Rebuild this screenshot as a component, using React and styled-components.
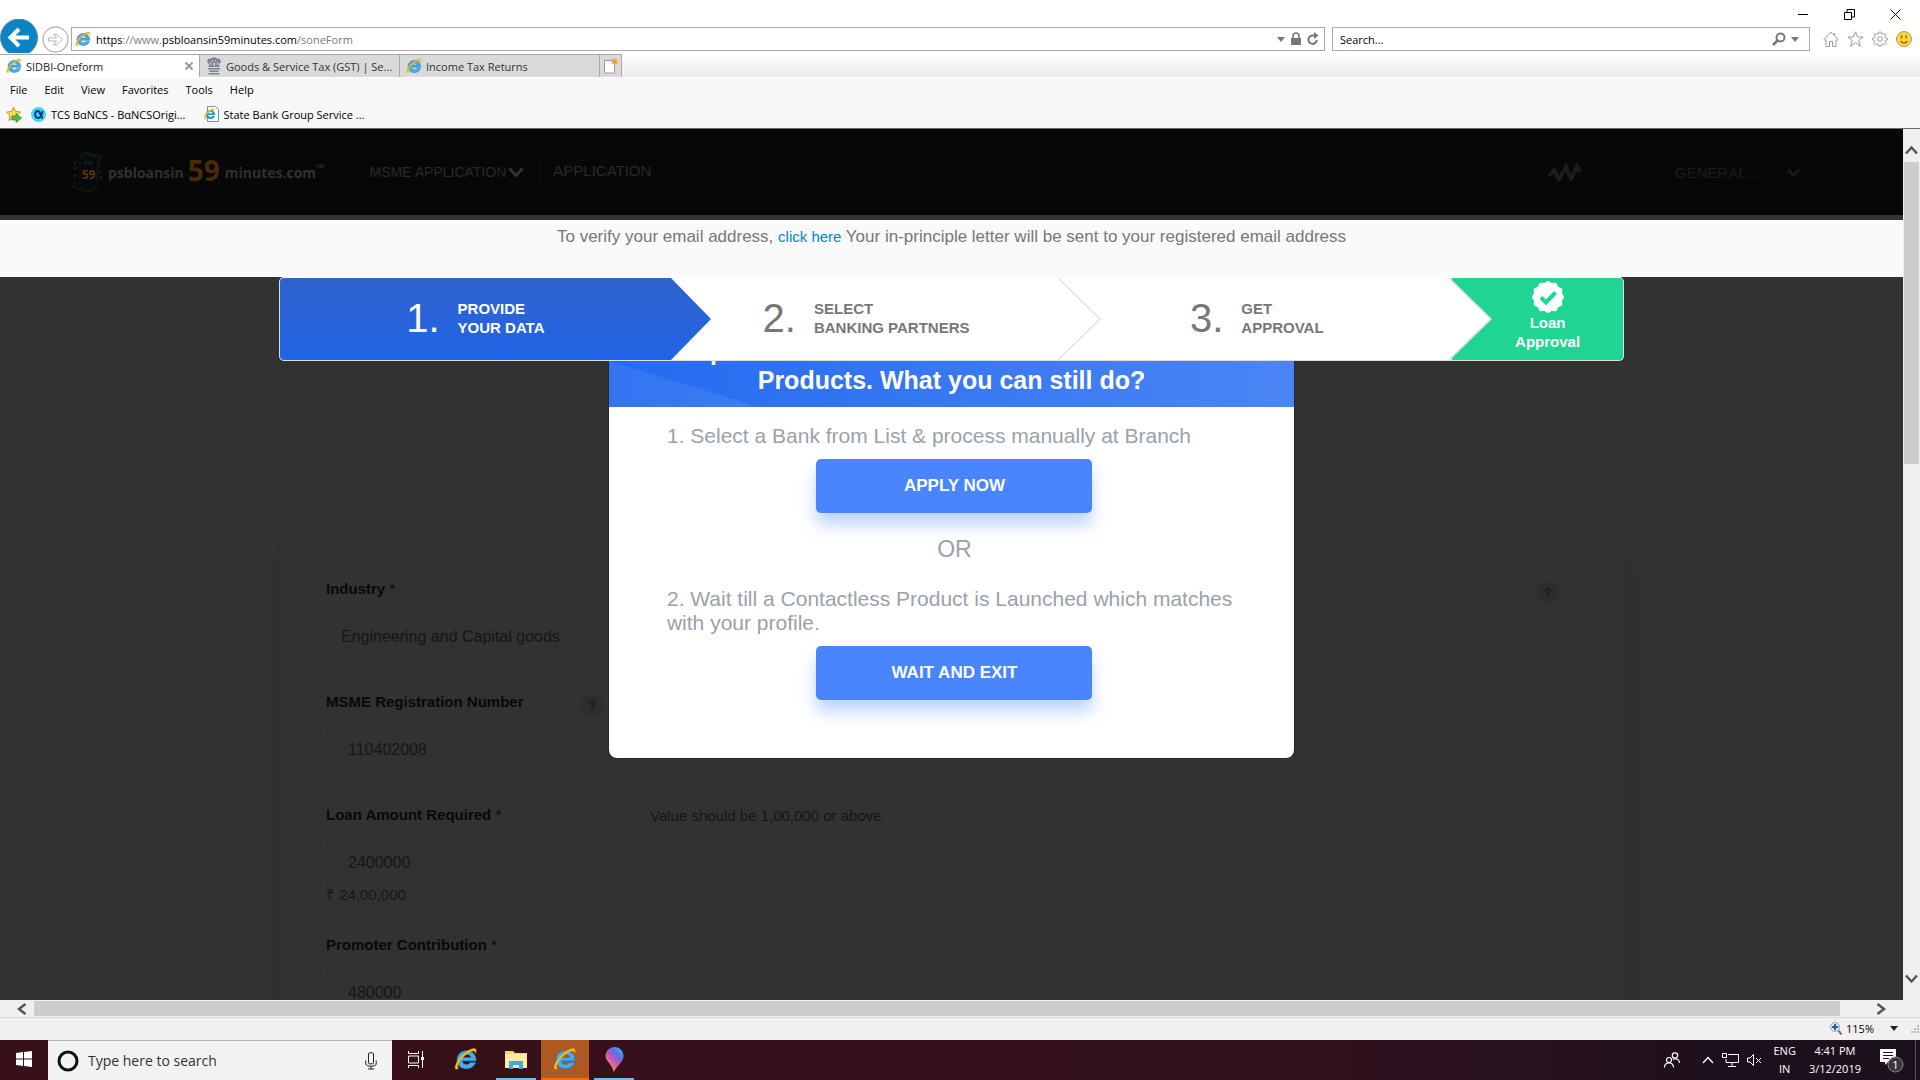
import React from "react";
import styled, { createGlobalStyle, css } from "styled-components";

const UI = '"Open Sans", "Noto Sans", sans-serif';
const BODY = '"Liberation Sans", Arial, sans-serif';

const GlobalStyle = createGlobalStyle`
  *, *::before, *::after { box-sizing: border-box; }
  body { margin: 0; overflow: hidden; background: #323232; }
  button, input { font: inherit; color: inherit; }
  button { border: 0; padding: 0; background: none; cursor: pointer; }
  svg { display: block; flex: none; }
  a { text-decoration: none; color: inherit; }
`;

const Desktop = styled.div`
  display: flex;
  flex-direction: column;
  height: 100vh;
  font-family: ${UI};
  font-size: 11px;
  color: #000;
`;

/* ---------- browser chrome ---------- */

const Chrome = styled.header`
  flex: none;
  background: #fff;
  border-bottom: 1px solid #6d6d6d;
`;

const TitleBar = styled.div`
  display: flex;
  justify-content: flex-end;
  height: 25px;
  padding: 2px 2px 0 0;
`;

const WindowButton = styled.button`
  display: flex;
  align-items: center;
  justify-content: center;
  width: 46px;
  height: 24px;
`;

const AddressRow = styled.div`
  display: flex;
  align-items: center;
  height: 29px;
  padding: 0 8px 1px 0;
`;

const BackButton = styled.button`
  width: 39px;
  height: 28px;
  svg { margin-top: -6px; }
`;

const ForwardButton = styled.button`
  width: 32px;
  padding-left: 3px;
`;

const Box = styled.div`
  display: flex;
  align-items: center;
  gap: 5px;
  height: 24px;
  padding: 0 5px 0 3px;
  border: 1px solid #a9a9a9;
  background: #fff;
`;

const AddressBox = styled(Box)`
  flex: 1;
  margin-right: 7px;
`;

const Address = styled.div`
  flex: 1;
  outline: 0;
  color: #7b7b7b;
  white-space: nowrap;
  b { font-weight: 400; color: #000; }
`;

const SearchBox = styled(Box)`
  width: 478px;
  padding-left: 7px;
`;

const SearchField = styled.input`
  flex: 1;
  border: 0;
  padding: 0;
  outline: 0;
  background: none;
  &::placeholder { color: #000; opacity: 1; }
`;

const ChromeIcons = styled.div`
  display: flex;
  align-items: center;
  gap: 8px;
  margin-left: 13px;
`;

const TabRow = styled.div`
  display: flex;
  height: 24px;
  background: linear-gradient(#fff, #ececec);
  border-bottom: 1px solid #fff;
`;

const Tab = styled.button`
  display: flex;
  align-items: center;
  gap: 4px;
  width: 200px;
  padding: 0 6px;
  border: solid #a9a9a9;
  border-width: 1px 1px 0 0;
  text-align: left;
  white-space: nowrap;
  color: ${(p) => (p.$active ? "#222" : "#333")};
  background: ${(p) => (p.$active ? "#fff" : "#dadada")};
  span { flex: 1; }
`;

const NewTab = styled(Tab)`
  width: 22px;
  padding: 0 4px;
`;

const MenuBar = styled.nav`
  display: flex;
  align-items: center;
  gap: 17px;
  height: 24px;
  padding: 0 0 2px 10px;
  background: #f7f7f7;
`;

const FavoritesBar = styled(MenuBar)`
  gap: 18px;
  height: 26px;
  padding-left: 6px;
`;

const Favorite = styled.a`
  display: flex;
  align-items: center;
  gap: 5px;
`;

const FavGroup = styled.div`
  display: flex;
  gap: 9px;
`;

/* ---------- viewport and scrollbars ---------- */

const Viewport = styled.div`
  display: flex;
  flex: 1;
  min-height: 0;
`;

const VScroll = styled.div`
  display: flex;
  flex-direction: column;
  align-items: center;
  justify-content: space-between;
  width: 17px;
  padding: 16px 0;
  background: #efefef;
`;

const VThumb = styled.div`
  flex: 0 0 36%;
  width: 15px;
  margin: 7px 0 auto;
  background: #cdcdcd;
`;

const HScroll = styled.div`
  display: flex;
  align-items: center;
  flex: none;
  gap: 7px;
  height: 17px;
  padding: 0 33px 0 16px;
  background: #f0f0f0;
`;

const HThumb = styled.div`
  flex: 1;
  height: 15px;
  margin-right: 29px;
  background: #cdcdcd;
`;

const StatusBar = styled.div`
  display: flex;
  align-items: center;
  justify-content: flex-end;
  flex: none;
  gap: 4px;
  height: 23px;
  padding-bottom: 1px;
  border-top: 1px solid #d9d9d9;
  background: #f0f0f0;
`;

const Zoom = styled.button`
  display: flex;
  align-items: center;
  gap: 4px;
  svg:last-child { margin: 0 8px 0 12px; }
`;

/* ---------- web page ---------- */

const Page = styled.main`
  position: relative;
  flex: 1;
  min-width: 0;
  overflow: hidden;
  background: #323232;
  font-family: ${BODY};
`;

const SiteHeader = styled.div`
  display: flex;
  align-items: center;
  height: 91px;
  padding: 0 103px 0 72px;
  border-bottom: 5px solid #343233;
  background: #060808;
  font-size: 14px;
  color: #292929;
`;

const Logo = styled.a`
  display: flex;
  align-items: center;
  margin-right: 45px;
  gap: 4px;
  font-family: ${UI};
  font-weight: 700;
  font-size: 14px;
  color: #303030;
  sup { font-size: 11px; line-height: 8px; vertical-align: 6px; }
`;

const LogoNumber = styled.span`
  font-size: 28px;
  line-height: 40px;
  margin: -4px 1px 0 0;
  color: #4a2b03;
`;

const NavButton = styled.button`
  display: flex;
  align-items: center;
  gap: 2px;
`;

const NavLink = styled.a`
  margin-left: 15px;
  padding: 0 0 4px 13px;
  border-left: 1px solid #0d0f0f;
  font-size: 15px;
`;

const Activity = styled.div`
  margin-left: auto;
  margin-right: 93px;
`;

const Account = styled(NavButton)`
  gap: 28px;
  font-size: 15px;
  color: #1a1a20;
`;

const Notice = styled.p`
  height: 57px;
  margin: 0;
  padding-top: 7px;
  text-align: center;
  font-size: 17px;
  line-height: 20px;
  color: #777;
  background: #fafafa;
  a { font-size: 15px; color: #0084cc; }
`;

const column = css`
  width: calc(100% - 558px);
  margin: 0 auto;
`;

const Steps = styled.ol`
  ${column}
  position: relative;
  z-index: 2;
  display: grid;
  grid-template-columns: 391fr 391fr 391fr 171fr;
  height: 84px;
  padding: 0;
  list-style: none;
  overflow: hidden;
  border: 1px solid #dcdcdc;
  border-top-color: #fafafa;
  border-radius: 5px;
  background: #fff;
  font-size: 15px;
  font-weight: 700;
  line-height: 19px;
`;

const Step = styled.li`
  position: relative;
  display: flex;
  align-items: center;
  justify-content: center;
  gap: 18px;
  padding-bottom: 2px;
  color: ${(p) => (p.$active ? "#fff" : "#777")};
  background: ${(p) => (p.$active ? "linear-gradient(#2f63cb, #2064e8)" : "#fff")};
`;

const StepNumber = styled.span`
  font-size: 40px;
  line-height: 44px;
  font-weight: 400;
`;

const StepArrow = styled.svg`
  position: absolute;
  z-index: 1;
  top: 0;
  left: 100%;
  width: 40px;
  height: 100%;
  overflow: visible;
`;

const Approval = styled.li`
  display: flex;
  flex-direction: column;
  align-items: center;
  padding: 3px 0 0 20px;
  text-align: center;
  color: #fff;
  background: #20d491;
`;

const FormCard = styled.form`
  ${column}
  display: grid;
  grid-template-columns: 277px 277px 1fr 1fr;
  column-gap: 47px;
  align-items: start;
  margin-top: 179px;
  padding: 37px 64px 37px 46px;
  border: 1px solid #2d2d2d;
  border-radius: 5px;
  box-shadow: 14px 14px 40px rgba(0, 0, 0, 0.05);
  font-size: 15px;
  color: #161616;
`;

const Field = styled.div`
  display: flex;
  flex-direction: column;
  grid-column: ${(p) => p.$column || "1"};
  margin-bottom: 31px;
`;

const LabelRow = styled.div`
  display: flex;
  justify-content: space-between;
  height: 36px;
  line-height: 22px;
  label { font-weight: 700; color: #090909; }
  span { font-weight: 400; }
`;

const Help = styled.button`
  align-self: flex-start;
  width: 22px;
  height: 22px;
  margin-top: 4px;
  border-radius: 50%;
  font-size: 13px;
  font-weight: 700;
  line-height: 22px;
  background: #2d2d2d;
  color: #1a1a1a;
`;

const TextInput = styled.input`
  height: 46px;
  width: 100%;
  padding: 0 21px;
  border: 1px solid #2e2e2e;
  border-radius: 5px;
  background: #323232;
  font-size: 16px;
  outline: 0;
`;

const WideInput = styled(TextInput)`
  padding: 0 14px;
  border-radius: 1px;
`;

const Hint = styled.span`
  height: 17px;
  line-height: 17px;
`;

const Limit = styled.p`
  grid-column: 2 / span 2;
  margin: 0;
  line-height: 24px;
`;

/* ---------- dialog ---------- */

const Dialog = styled.section`
  position: absolute;
  z-index: 1;
  top: 172px;
  left: 0;
  right: 0;
  width: 36%;
  min-width: 600px;
  margin: 0 auto;
  overflow: hidden;
  border-radius: 8px;
  background: #fff;
  box-shadow: 0 0 0 1px #292929;
`;

const DialogTitle = styled.h2`
  height: 106px;
  margin: 0;
  padding-top: 36px;
  text-align: center;
  font-size: 25px;
  line-height: 29px;
  color: #fff;
  background:
    linear-gradient(17deg, rgba(255, 255, 255, 0.07) 50%, transparent 50%) 0 100% / 150px 46px no-repeat,
    linear-gradient(90deg, #246bf0, #4b85f5);
`;

const ClippedLine = styled.span`
  display: block;
  padding-left: 101px;
  text-align: left;
`;

const DialogBody = styled.div`
  display: flex;
  flex-direction: column;
  align-items: center;
  padding: 17px 52px 34px 58px;
  font-size: 21px;
  line-height: 24px;
  color: #9aa2a9;
  p { align-self: stretch; margin: 0; }
`;

const Action = styled.button`
  width: 276px;
  height: 54px;
  margin: 11px 0 24px;
  border-radius: 5px;
  font-size: 17px;
  font-weight: 700;
  color: #fff;
  background: #4885ff;
  box-shadow: 0 12px 16px rgba(72, 133, 255, 0.35);
`;

const Or = styled.div`
  margin-bottom: 26px;
  font-size: 23px;
`;

/* ---------- taskbar ---------- */

const Taskbar = styled.footer`
  display: flex;
  flex: none;
  height: 40px;
  color: #fff;
  background: linear-gradient(90deg, #381019, #35101a 45%, #30111e 70%, #1b101c 92%);
`;

const TaskButton = styled.button`
  display: flex;
  align-items: center;
  justify-content: center;
  width: ${(p) => p.$width || 50}px;
  height: 40px;
  margin-left: ${(p) => p.$gap || 0}px;
  border-bottom: 2px solid ${(p) => p.$line || "transparent"};
  background: ${(p) => p.$fill || "none"};
`;

const TaskSearch = styled.label`
  display: flex;
  align-items: center;
  gap: 9px;
  width: 344px;
  padding: 0 15px 0 9px;
  border-top: 1px solid #b9b2b4;
  background: #f2f2f2;
  font-size: 14px;
  color: #333;
  input {
    flex: 1;
    min-width: 0;
    padding: 0;
    border: 0;
    outline: 0;
    background: none;
  }
  input::placeholder { color: #333; opacity: 1; }
`;

const Tray = styled.div`
  display: flex;
  align-items: center;
  margin-left: auto;
  margin-right: 4px;
  padding-right: 11px;
  border-right: 1px solid #56505a;
  text-align: center;
`;

const TrayIcons = styled.div`
  display: flex;
  align-items: center;
  gap: 8px;
  margin-right: 11px;
  svg:first-child { margin-right: 13px; }
`;

const TrayText = styled.button`
  margin-right: ${(p) => p.$space}px;
  line-height: 18px;
`;

/* ---------- icons ---------- */

const IE = ({ size = 16 }) => (
  <svg width={size} height={size} viewBox="0 0 32 32">
    <path d="M29.5 18.5H11.2c.4 3 2.5 4.8 5.5 4.8 2.2 0 3.800-.8 4.700-2.500h7.500c-1.700 5-6.300 8.200-12.200 8.200C9 29 4 24.100 4 17.200 4 10.200 9.200 5 16.700 5c7.700 0 12.900 5.200 12.800 13.500zM22.300 14c-.4-2.500-2.500-4.100-5.500-4.100-2.900 0-4.900 1.500-5.500 4.100z" fill="#46aee6" stroke="#1b78bd" strokeWidth="1" />
    <path d="M6 28.500C1.500 31.500-.5 28 4 20 9 11 19 3 26 2c4-.5 4.500 3 2.500 7 .5-3-1-4.500-4.500-3.500C17 7.500 9 16 6 22c-1.500 3.500-1.500 5.500 0 6.500z" fill="#f6c01c" stroke="#d49a10" strokeWidth=".6" />
  </svg>
);

const Emblem = () => (
  <svg width="16" height="18" viewBox="0 0 16 18" fill="#7d8391">
    <path d="M5 1.500C6 0 10 0 11 1.500l3 .5 1 3-2 2 .5 3H2.500L3 7 1 5l1-3zM2 11h12v1.500H2zM3.500 13.500h9V15h-9zM2.500 16h11v1.500h-11z" />
    <path d="M6 3h1.200v1.200H6zM9 3h1.200v1.200H9zM7.300 5.500h1.600V9H7.300zM4 5h1v3H4zM11 5h1v3h-1z" fill="#dadada" />
  </svg>
);

const Caret = ({ color = "#777" }) => (
  <svg width="8" height="5" viewBox="0 0 8 5"><path d="M0 0h8L4 5z" fill={color} /></svg>
);

const Chevron = ({ d, w, h, color, stroke = 2 }) => (
  <svg width={w} height={h} viewBox={`0 0 ${w} ${h}`} fill="none" stroke={color} strokeWidth={stroke}><path d={d} /></svg>
);

const LogoMark = () => (
  <svg width="32" height="42" viewBox="0 0 32 42" fill="none">
    <path d="M8 5l6-4 15 5-3 12M10 3l18 2-4 33M4 32l-3 4 17 5 4-6" stroke="#141d0d" strokeWidth="1.200" />
    <rect x="8" y="6" width="17" height="31" rx="2" fill="#06080d" stroke="#0c160b" />
    <path d="M3 11v3M5 16l-3 2M28 20l2 2M28 25l2 3M4 23l-2 3" stroke="#1e270f" strokeWidth="1.500" />
    <text x="16.500" y="14" textAnchor="middle" fontFamily={UI} fontSize="5" fontWeight="700" fill="#0a2a15">PSB</text>
    <text x="16.500" y="28" textAnchor="middle" fontFamily={UI} fontSize="12" fontWeight="700" fill="#5b3304">59</text>
  </svg>
);

const badge = Array.from({ length: 24 }, (_, i) => {
  const r = i % 2 ? 14 : 16;
  const a = (i * Math.PI) / 12;
  return `${16 + r * Math.sin(a)},${16 - r * Math.cos(a)}`;
}).join(" ");

const MENU = ["File", "Edit", "View", "Favorites", "Tools", "Help"];

function BrowserChrome() {
  return (
    <Chrome>
      <TitleBar>
        <WindowButton aria-label="Minimize"><Chevron w={10} h={10} d="M0 5.500h10" color="#000" stroke={1} /></WindowButton>
        <WindowButton aria-label="Restore"><Chevron w={11} h={11} d="M.5 3.500h7v7h-7zM3 3V.5h7.500V8H8" color="#000" stroke={1} /></WindowButton>
        <WindowButton aria-label="Close"><Chevron w={11} h={11} d="M.5.5l10 10M10.500.5l-10 10" color="#000" stroke={1} /></WindowButton>
      </TitleBar>
      <AddressRow>
        <BackButton aria-label="Back">
          <svg width="39" height="34" viewBox="0 0 39 34">
            <circle cx="19" cy="18.500" r="18.500" fill="#0a84c6" stroke="#6b8494" />
            <path d="M29 18.500H11M19 10l-8.500 8.500L19 27" fill="none" stroke="#fff" strokeWidth="4" />
          </svg>
        </BackButton>
        <ForwardButton aria-label="Forward">
          <svg width="27" height="27" viewBox="0 0 27 27" fill="none" stroke="#b5b5b5">
            <circle cx="13.500" cy="13.500" r="12.500" strokeWidth="1.300" />
            <path d="M6.500 12v3h8l-3 3.500h3.500l5-5-5-5h-3.500l3 3.500z" />
          </svg>
        </ForwardButton>
        <AddressBox>
          <IE />
          <Address role="textbox" aria-label="Address" contentEditable suppressContentEditableWarning spellCheck={false}>
            <b>https</b>://www.<b>psbloansin59minutes.com</b>/soneForm
          </Address>
          <Caret />
          <svg width="12" height="14" viewBox="0 0 12 14"><path d="M1 6h10v7H1z" fill="#777" /><path d="M3 6V4a3 3 0 016 0v2" fill="none" stroke="#777" strokeWidth="1.600" /></svg>
          <svg width="12" height="14" viewBox="0 0 12 14"><path d="M9.800 8A4.200 4.200 0 116 3.500h2" fill="none" stroke="#777" strokeWidth="2" /><path d="M7 0l4.500 3.500L7 7z" fill="#777" /></svg>
        </AddressBox>
        <SearchBox>
          <SearchField aria-label="Search" placeholder="Search..." />
          <svg width="14" height="14" viewBox="0 0 14 14" fill="none" stroke="#777"><circle cx="8.500" cy="5.500" r="4" strokeWidth="2" /><path d="M5.500 8.500L1 13" strokeWidth="2.500" /></svg>
          <Caret />
          <span />
        </SearchBox>
        <ChromeIcons>
          <svg width="16" height="16" viewBox="0 0 16 16" fill="none" stroke="#9b9b9b"><path d="M1 8.500L8 1l7 7.500-1 1-1-.9V15.500H9.500v-5h-3v5H3V8.600l-1 .9zM11.500 2v2.500" /></svg>
          <svg width="17" height="16" viewBox="0 0 17 16" fill="none" stroke="#9b9b9b"><path d="M8.500.8l2 5.200h5.700l-4.500 3.500 1.700 5.700-4.900-3.500-4.900 3.500 1.700-5.700L.8 6h5.700z" /></svg>
          <svg width="16" height="16" viewBox="0 0 16 16" fill="none" stroke="#9b9b9b"><path d="M6.800 1h2.400l.4 2 1.300.5 1.700-1.100 1.500 1.600-1.100 1.600.5 1.300 2 .4v1.600l-2 .4-.5 1.300 1.100 1.700-1.600 1.600-1.600-1.100-1.300.5-.4 1.700H6.800l-.4-1.700-1.300-.5-1.700 1.100L1.900 12.300l1.100-1.700-.5-1.300-2-.4V7.300l2-.4L3 5.600 1.900 4l1.500-1.600 1.700 1.100L6.400 3z" /><circle cx="8" cy="8" r="2.300" /></svg>
          <svg width="16" height="16" viewBox="0 0 16 16"><circle cx="8" cy="8" r="7.500" fill="#ffd93b" stroke="#a79a62" /><path d="M5.500 4v3.500M10 4v3.500M4.500 10c1.500 2.500 5.500 2.500 7 0" fill="none" stroke="#8a7426" strokeWidth="1.500" /></svg>
        </ChromeIcons>
      </AddressRow>
      <TabRow>
        <Tab $active><IE /><span>SIDBI-Oneform</span><Chevron w={8} h={8} d="M.5.5l7 7M7.500.5l-7 7" color="#999" /></Tab>
        <Tab><Emblem /><span>Goods &amp; Service Tax (GST) | Se...</span></Tab>
        <Tab><IE /><span>Income Tax Returns</span></Tab>
        <NewTab aria-label="New tab">
          <svg width="14" height="16" viewBox="0 0 14 16"><path d="M.5 2.500h7l3 3v9.500H.5z" fill="#fff" stroke="#999" /><path d="M10.500 0v7M7 3.500h7M8 1l5 5M13 1L8 6" stroke="#f2a11d" strokeWidth="1.200" /></svg>
        </NewTab>
      </TabRow>
      <MenuBar>{MENU.map((m) => <button key={m}>{m}</button>)}</MenuBar>
      <FavoritesBar>
        <FavGroup>
          <svg width="16" height="17" viewBox="0 0 16 17"><path d="M7.500 1l2 4.500 5 .5-3.700 3.500 1 5-4.300-2.500-4.500 2.500 1-5L.5 6l5-.5z" fill="#fbdc5a" stroke="#c9962a" /><path d="M6 10h4V7.500l5.500 4.500-5.500 4.500V14H6z" fill="#45c13a" stroke="#2a8a22" strokeWidth=".7" /></svg>
          <Favorite href="#tcs">
            <svg width="15" height="15" viewBox="0 0 15 15" fill="none">
              <circle cx="7.500" cy="7.500" r="7.500" fill="#3fd8ea" />
              <path d="M11.500 4c-.8 4-2.300 7-4.500 7-1.800 0-2.800-1.500-2.800-3.500S5.200 4 7 4c2.300 0 2.800 7 5 7" stroke="#122a8c" strokeWidth="1.800" />
            </svg>
            TCS BαNCS - BαNCSOrigi...
          </Favorite>
        </FavGroup>
        <Favorite href="#sbi">
          <svg width="15" height="16" viewBox="0 0 15 16"><path d="M3.500.5h8l3 3v12h-11z" fill="#fff" stroke="#8a8a8a" /><g transform="translate(0 2) scale(.38)"><path d="M29.500 18.500H11.200c.4 3 2.500 4.800 5.500 4.800 2.200 0 3.800-.8 4.700-2.500h7.500c-1.700 5-6.300 8.200-12.200 8.200C9 29 4 24.100 4 17.200 4 10.200 9.200 5 16.700 5c7.700 0 12.900 5.200 12.800 13.500zM22.300 14c-.4-2.500-2.500-4.100-5.500-4.100-2.900 0-4.900 1.500-5.500 4.100z" fill="#2f97db" /><path d="M5 29C2 29 1 26 5 18 10 9 20 2 27 4" fill="none" stroke="#f6c01c" strokeWidth="3.500" /></g></svg>
          State Bank Group Service ...
        </Favorite>
      </FavoritesBar>
    </Chrome>
  );
}

function Stepper() {
  return (
    <Steps>
      <Step $active>
        <StepNumber>1.</StepNumber><span>PROVIDE<br />YOUR DATA</span>
        <StepArrow viewBox="0 0 40 82" preserveAspectRatio="none">
          <defs><linearGradient id="g" x2="0" y2="1"><stop stopColor="#2f63cb" /><stop offset="1" stopColor="#2064e8" /></linearGradient></defs>
          <path d="M-1 0H0L40 41 0 82h-1z" fill="url(#g)" />
        </StepArrow>
      </Step>
      <Step>
        <StepNumber>2.</StepNumber><span>SELECT<br />BANKING PARTNERS</span>
        <StepArrow viewBox="0 0 40 82" preserveAspectRatio="none"><path d="M-3 0L39 41-3 82" fill="#fff" stroke="#e2e2e2" strokeWidth="1.500" /></StepArrow>
      </Step>
      <Step>
        <StepNumber>3.</StepNumber><span>GET<br />APPROVAL</span>
        <StepArrow viewBox="0 0 40 82" preserveAspectRatio="none"><path d="M-3 0L39 41-3 82" fill="#fff" stroke="#dcdcdc" strokeWidth="1.500" /></StepArrow>
      </Step>
      <Approval>
        <svg width="32" height="32" viewBox="0 0 32 32"><polygon points={badge} fill="#fff" stroke="#fff" strokeWidth="1" strokeLinejoin="round" /><path d="M9 16.500l5 5 9.500-10" fill="none" stroke="#20d491" strokeWidth="4" /></svg>
        <span>Loan<br />Approval</span>
      </Approval>
    </Steps>
  );
}

function LoanForm() {
  return (
    <FormCard>
      <Field $column="1 / -1">
        <LabelRow><label htmlFor="industry">Industry <span>*</span></label><Help type="button">?</Help></LabelRow>
        <WideInput id="industry" defaultValue="Engineering and Capital goods" />
      </Field>
      <Field>
        <LabelRow><label htmlFor="msme">MSME Registration Number</label><Help type="button">?</Help></LabelRow>
        <TextInput id="msme" defaultValue="110402008" />
      </Field>
      <Field $column="2">
        <LabelRow />
        <TextInput aria-label="Registration detail" />
      </Field>
      <Field>
        <LabelRow><label htmlFor="amount">Loan Amount Required <span>*</span></label></LabelRow>
        <TextInput id="amount" defaultValue="2400000" />
        <Hint>₹ 24,00,000</Hint>
      </Field>
      <Limit>Value should be 1,00,000 or above</Limit>
      <Field>
        <LabelRow><label htmlFor="promoter">Promoter Contribution <span>*</span></label></LabelRow>
        <TextInput id="promoter" defaultValue="480000" />
      </Field>
    </FormCard>
  );
}

export default function App() {
  return (
    <Desktop>
      <GlobalStyle />
      <BrowserChrome />
      <Viewport>
        <Page>
          <SiteHeader>
            <Logo href="#home">
              <LogoMark />
              <span>psbloansin</span><LogoNumber>59</LogoNumber><span>minutes.com<sup>™</sup></span>
            </Logo>
            <NavButton>MSME APPLICATION<Chevron w={16} h={12} d="M1.500 2.500L8 9.500l6.500-7" color="#303030" stroke={3} /></NavButton>
            <NavLink href="#application">APPLICATION</NavLink>
            <Activity>
              <svg width="34" height="18" viewBox="0 0 34 18" fill="none" stroke="#1c1c1c" strokeWidth="4"><path d="M1 13l5-6 5 9 7-12 5 12 6-13 3 6" /></svg>
            </Activity>
            <Account>GENERAL...<Chevron w={13} h={9} d="M1 1.500l5.500 6L12 1.500" color="#191921" stroke={3} /></Account>
          </SiteHeader>
          <Notice>
            To verify your email address, <a href="#verify">click here</a> Your in-principle letter will be sent to your registered email address
          </Notice>
          <Stepper />
          <LoanForm />
          <Dialog role="dialog">
            <DialogTitle><ClippedLine>p</ClippedLine>Products. What you can still do?</DialogTitle>
            <DialogBody>
              <p>1. Select a Bank from List &amp; process manually at Branch</p>
              <Action>APPLY NOW</Action>
              <Or>OR</Or>
              <p>2. Wait till a Contactless Product is Launched which matches with your profile.</p>
              <Action>WAIT AND EXIT</Action>
            </DialogBody>
          </Dialog>
        </Page>
        <VScroll>
          <Chevron w={13} h={10} d="M1 8.500l5.500-6 5.500 6" color="#555" stroke={2.5} />
          <VThumb />
          <Chevron w={13} h={10} d="M1 1.500l5.500 6 5.500-6" color="#555" stroke={2.5} />
        </VScroll>
      </Viewport>
      <HScroll>
        <Chevron w={11} h={12} d="M9.500 1L3 6l6.500 5" color="#555" stroke={2.5} />
        <HThumb />
        <Chevron w={11} h={12} d="M1.500 1L8 6l-6.500 5" color="#555" stroke={2.5} />
      </HScroll>
      <StatusBar>
        <Zoom>
          <svg width="12" height="13" viewBox="0 0 12 13"><circle cx="5" cy="5" r="4.500" fill="#dcecf8" stroke="#8aa4b8" /><path d="M5 2v6M2 5h6" stroke="#1d62b5" strokeWidth="2" /><path d="M8.500 8.500l3 4" stroke="#a0643a" strokeWidth="2" /></svg>
          115%<Caret color="#222" />
        </Zoom>
        <svg width="10" height="10" viewBox="0 0 10 10" fill="#bdbdbd"><path d="M7 1h2v2H7zM7 4h2v2H7zM7 7h2v2H7zM4 4h2v2H4zM4 7h2v2H4zM1 7h2v2H1z" /></svg>
      </StatusBar>
      <Taskbar>
        <TaskButton $width={48} aria-label="Start">
          <svg width="16" height="16" viewBox="0 0 16 16" fill="#fff"><path d="M0 2l7-1v6.500H0zM8 1l8-1v7.500H8zM0 8.500h7V15l-7-1zM8 8.500h8V16l-8-1z" /></svg>
        </TaskButton>
        <TaskSearch>
          <svg width="22" height="22" viewBox="0 0 22 22" fill="none" stroke="#111"><circle cx="11" cy="11" r="9" strokeWidth="3" /></svg>
          <input placeholder="Type here to search" />
          <svg width="12" height="18" viewBox="0 0 12 18" fill="none" stroke="#222"><rect x="3.500" y=".8" width="5" height="11" rx="1" /><path d="M.8 8.500v3.500c0 3 10.400 3 10.400 0V8.500M6 14.500v2.500M3 17h6" /></svg>
        </TaskSearch>
        <TaskButton $width={48} aria-label="Task view">
          <svg width="17" height="17" viewBox="0 0 17 17" fill="none" stroke="#fff"><path d="M.5 0v2.500h10V0M.5 17v-2.500h10V17M.5 5h10v7H.5zM14.500 0v17" /><path d="M13 6h3v3h-3z" fill="#fff" stroke="none" /></svg>
        </TaskButton>
        <TaskButton $width={52} aria-label="Internet Explorer"><IE size={24} /></TaskButton>
        <TaskButton $width={40} $gap={4} $line="#76b9ed" aria-label="File Explorer">
          <svg width="22" height="19" viewBox="0 0 22 19"><path d="M0 1h8l2 2h12v15H0z" fill="#fbd667" /><path d="M0 4h22v14H0z" fill="#ffe9a3" /><path d="M4 19v-8h14v8h-4v-4H8v4z" fill="#3aaee4" /></svg>
        </TaskButton>
        <TaskButton $width={48} $gap={5} $line="#ff6a00" $fill="#ae5921" aria-label="SIDBI-Oneform"><IE size={24} /></TaskButton>
        <TaskButton $width={40} $gap={5} $line="#76b9ed" aria-label="Paint 3D">
          <svg width="19" height="25" viewBox="0 0 19 25"><defs><linearGradient id="p" x1="1" y1="0" x2=".2" y2="1"><stop stopColor="#26d3f5" /><stop offset=".35" stopColor="#5a6fe8" /><stop offset=".6" stopColor="#d04fb8" /><stop offset="1" stopColor="#ffb23c" /></linearGradient></defs><path d="M9.500 0c5 0 9 4 9 9 0 6-6 9-10 16C8 18 .5 14 .5 9c0-5 4-9 9-9z" fill="url(#p)" /></svg>
        </TaskButton>
        <Tray>
          <TrayIcons>
            <svg width="18" height="16" viewBox="0 0 18 16" fill="none" stroke="#fff" strokeWidth="1.200"><circle cx="6" cy="8" r="2.500" /><path d="M1.500 15.500c0-6 9-6 9 0" /><circle cx="12" cy="3.500" r="2.700" /><path d="M10 7.500c3-2 6.500 0 6.500 3.500" /></svg>
            <Chevron w={12} h={8} d="M1 7l5-5.500L11 7" color="#fff" stroke={1.3} />
            <svg width="17" height="14" viewBox="0 0 17 14" fill="none" stroke="#fff"><path d="M6 1.500h10.500v8H4V6M10 9.500V13M6 13.500h8M.5.5h4v4h-4z" /></svg>
            <svg width="15" height="12" viewBox="0 0 15 12" fill="none" stroke="#fff"><path d="M.5 4v4H3l3.500 3.500V.5L3 4zM9 4l5 5M14 4L9 9" /></svg>
          </TrayIcons>
          <TrayText $space={13}>ENG<br />IN</TrayText>
          <TrayText $space={18}>4:41 PM<br />3/12/2019</TrayText>
          <svg width="25" height="26" viewBox="0 0 25 26"><path d="M1 2h16v13H9l-3 3v-3H1z" fill="#fff" /><path d="M4 5.500h10M4 8.500h10M4 11.500h6" stroke="#1b101c" /><circle cx="16.500" cy="17.500" r="7.500" fill="#3a363c" stroke="#8e8a90" /><text x="16.500" y="21.500" textAnchor="middle" fontFamily={UI} fontSize="11" fill="#fff">1</text></svg>
        </Tray>
      </Taskbar>
    </Desktop>
  );
}
